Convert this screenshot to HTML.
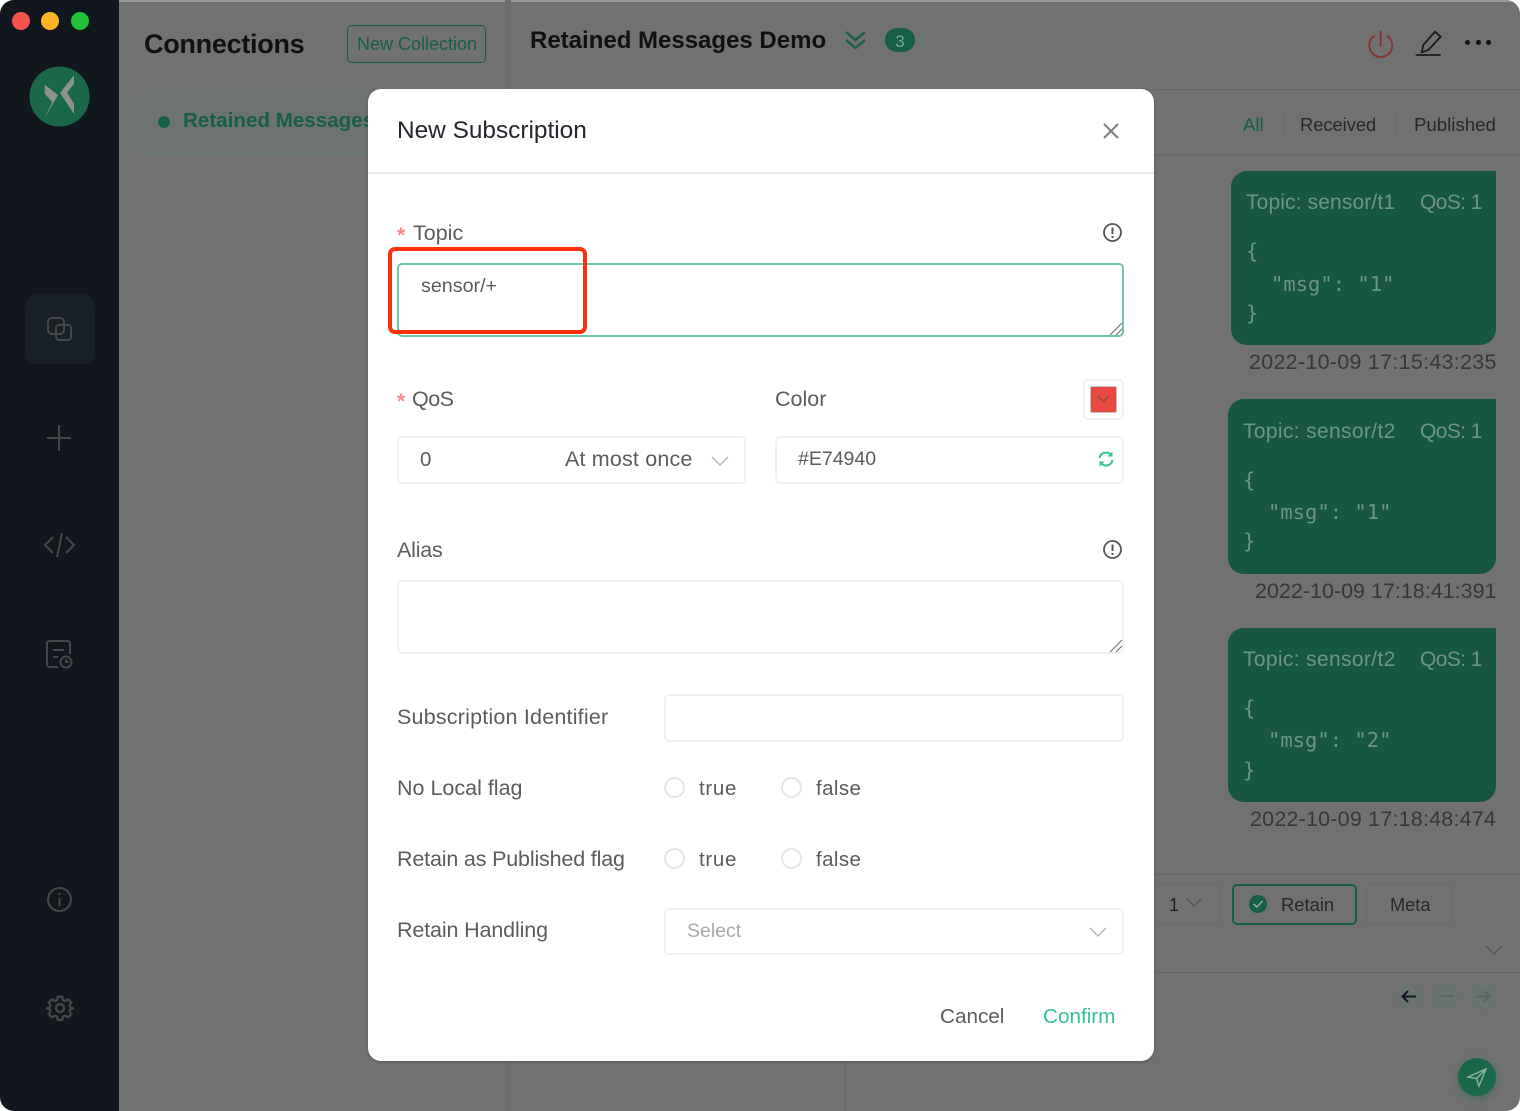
<!DOCTYPE html>
<html><head><meta charset="utf-8"><style>
*{box-sizing:border-box}
html,body{margin:0;padding:0}
body{width:1520px;height:1111px;position:relative;overflow:hidden;background:#fff;font-family:"Liberation Sans",sans-serif}
.a{position:absolute}
.t{position:absolute;white-space:nowrap;line-height:1}
.m{font-family:"DejaVu Sans Mono","Liberation Mono",monospace;font-weight:400}
.inp{position:absolute;background:#fff;border:2px solid #f0f1f4;border-radius:5px}
.l{color:#5c5c5c;font-size:21.5px}
.rd{position:absolute;width:21px;height:21px;border:2px solid #e3e5e8;border-radius:50%;background:#fff}
.bub{position:absolute;background:#175640;border-radius:16px 0 16px 16px}
.sb{stroke:#42474c;fill:none;stroke-width:2}
</style></head><body>
<div class="a" style="left:0;top:0;width:1520px;height:1111px;background:#717171;border-radius:14px;overflow:hidden">
  <div class="a" style="left:0;top:0;width:1520px;height:2px;background:#989898"></div>
  <div class="a" style="left:0;top:0;width:119px;height:1111px;background:#11171c"></div>
  <div class="a" style="left:505px;top:0;width:6px;height:1111px;background:#6c6c6c"></div>
  <div class="a" style="left:845px;top:1060px;width:1px;height:51px;background:#656565"></div>
  <div class="a" style="left:511px;top:89px;width:1009px;height:1px;background:#666"></div>
  <div class="a" style="left:1154px;top:154px;width:366px;height:2px;background:#6a6a6a"></div>
  <div class="a" style="left:1154px;top:874px;width:366px;height:1px;background:#656565"></div>
  <div class="a" style="left:1154px;top:972px;width:366px;height:1px;background:#656565"></div>
  <div class="a" style="left:134px;top:90px;width:240px;height:66px;background:#6c7371;border-radius:8px"></div>

  <div class="a" style="left:12px;top:12px;width:18px;height:18px;border-radius:50%;background:#f9524e"></div>
  <div class="a" style="left:41px;top:12px;width:18px;height:18px;border-radius:50%;background:#fcb426"></div>
  <div class="a" style="left:71px;top:12px;width:18px;height:18px;border-radius:50%;background:#22c13a"></div>

  <svg class="a" style="left:29px;top:66px" width="61" height="61" viewBox="0 0 61 61">
    <circle cx="30.5" cy="30.5" r="30" fill="#1a674a"/>
    <path d="M15.700 18.700L29 29L15.700 52L23.300 36L15.700 27.700Z" fill="#8c9490"/>
    <path d="M45 9.300L31 27L45 47.700V37.700L38 26.500L45 17.700Z" fill="#8c9490"/>
  </svg>

  <div class="a" style="left:25px;top:294px;width:70px;height:70px;border-radius:12px;background:#181f25"></div>
  <svg class="a" style="left:45px;top:315px" width="30" height="30" viewBox="0 0 30 30"><rect class="sb" x="3" y="3" width="16" height="16" rx="4"/><rect class="sb" x="11" y="10" width="15" height="15" rx="3"/></svg>
  <svg class="a" style="left:45px;top:424px" width="30" height="30" viewBox="0 0 30 30"><path class="sb" d="M2 14H26M14 1V27"/></svg>
  <svg class="a" style="left:42px;top:530px" width="35" height="30" viewBox="0 0 35 30"><path class="sb" d="M11 7L3 15L11 23M24 7L32 15L24 23M20 3L15 27"/></svg>
  <svg class="a" style="left:45px;top:640px" width="30" height="30" viewBox="0 0 30 30"><path class="sb" d="M13 27H5Q2 27 2 24V4Q2 1 5 1H22Q25 1 25 4V14M8 10H19M8 17H13"/><circle class="sb" cx="21" cy="22" r="5.5"/><path class="sb" d="M21 19V22H24"/></svg>
  <svg class="a" style="left:45px;top:885px" width="30" height="30" viewBox="0 0 30 30"><circle class="sb" cx="14.5" cy="14.5" r="11.5"/><path class="sb" d="M14.5 13V21M14.5 8V10"/></svg>
  <svg class="a" style="left:45px;top:993px" width="30" height="30" viewBox="0 0 24 24"><path class="sb" stroke-width="1.6" d="M10 2h4l.6 3 2 .9 2.6-1.6 2.8 2.8-1.6 2.6.9 2 3 .6v0l-3 .6-.9 2 1.6 2.6-2.8 2.8-2.6-1.6-2 .9-.6 3h-4l-.6-3-2-.9-2.6 1.6-2.8-2.8 1.6-2.6-.9-2-3-.6v0l3-.6.9-2L2 7.1l2.8-2.8 2.6 1.6 2-.9z" transform="translate(1.2 1.2) scale(.9)"/><circle class="sb" stroke-width="1.6" cx="12" cy="12" r="3.2"/></svg>

  <div class="t" style="left:144px;top:31px;font-size:27px;font-weight:700;color:#0f1114;letter-spacing:-.28px">Connections</div>
  <div class="a" style="left:347px;top:25px;width:139px;height:38px;border:1.5px solid #175f45;border-radius:5px"></div>
  <div class="t" style="left:357px;top:35px;font-size:18px;color:#175f45;line-height:18px">New Collection</div>
  <div class="a" style="left:158px;top:116px;width:12px;height:12px;border-radius:50%;background:#175f45"></div>
  <div class="t" style="left:183px;top:109px;font-size:20.600px;font-weight:700;color:#175f45;line-height:24px">Retained Messages</div>

  <div class="t" style="left:530px;top:29px;font-size:24px;font-weight:700;color:#0f1114">Retained Messages Demo</div>
  <svg class="a" style="left:843px;top:29px" width="25" height="22" viewBox="0 0 25 22"><path d="M3 3L12.500 11L22 3M3 11L12.500 19L22 11" fill="none" stroke="#175f45" stroke-width="2.200"/></svg>
  <div class="a" style="left:885px;top:28px;width:30px;height:24px;border-radius:12px;background:#175f45"></div>
  <div class="t" style="left:885px;top:33px;width:30px;text-align:center;font-size:17px;color:#7ea595">3</div>
  <svg class="a" style="left:1366px;top:29px" width="30" height="30" viewBox="0 0 30 30"><path d="M9 6.500A11.500 11.500 0 1 0 20.500 6.500M14.700 1.700V17.700" fill="none" stroke="#843735" stroke-width="2"/></svg>
  <svg class="a" style="left:1414px;top:29px" width="30" height="30" viewBox="0 0 30 30"><path d="M7.700 23.300L9.300 16L21 2.700L26.700 7.700L14.300 21ZM1.700 26H26.700" fill="none" stroke="#181b1f" stroke-width="1.800"/></svg>
  <div class="a" style="left:1465px;top:40px;width:5px;height:5px;border-radius:50%;background:#121417"></div>
  <div class="a" style="left:1476px;top:40px;width:5px;height:5px;border-radius:50%;background:#121417"></div>
  <div class="a" style="left:1486px;top:40px;width:5px;height:5px;border-radius:50%;background:#121417"></div>

  <div class="t" style="left:1243px;top:116px;font-size:18.500px;color:#175f45">All</div>
  <div class="a" style="left:1283px;top:110px;width:1px;height:28px;background:#686868"></div>
  <div class="t" style="left:1300px;top:116px;font-size:18.300px;color:#282828">Received</div>
  <div class="a" style="left:1395px;top:110px;width:1px;height:28px;background:#686868"></div>
  <div class="t" style="left:1414px;top:116px;font-size:18.650px;color:#282828">Published</div>

  <div class="bub" style="left:1231px;top:171px;width:265px;height:174px"></div>
  <div class="t" style="left:1246px;top:192px;font-size:21px;letter-spacing:.13px;color:#6e9484">Topic: sensor/t1</div>
  <div class="t" style="left:1420px;top:192px;font-size:21px;letter-spacing:-.6px;color:#6e9484">QoS: 1</div>
  <div class="t m" style="left:1246px;top:241px;font-size:20.500px;color:#6e9484">{</div>
  <div class="t m" style="left:1271px;top:274px;font-size:20.500px;color:#6e9484">"msg": "1"</div>
  <div class="t m" style="left:1246px;top:303px;font-size:20.500px;color:#6e9484">}</div>
  <div class="t" style="left:1249px;top:352px;font-size:21.500px;letter-spacing:.27px;color:#383838">2022-10-09 17:15:43:235</div>

  <div class="bub" style="left:1228px;top:399px;width:268px;height:175px"></div>
  <div class="t" style="left:1243px;top:421px;font-size:21px;letter-spacing:.35px;color:#6e9484">Topic: sensor/t2</div>
  <div class="t" style="left:1420px;top:421px;font-size:21px;letter-spacing:-.6px;color:#6e9484">QoS: 1</div>
  <div class="t m" style="left:1243px;top:470px;font-size:20.500px;color:#6e9484">{</div>
  <div class="t m" style="left:1268px;top:502px;font-size:20.500px;color:#6e9484">"msg": "1"</div>
  <div class="t m" style="left:1243px;top:531px;font-size:20.500px;color:#6e9484">}</div>
  <div class="t" style="left:1255px;top:581px;font-size:21.500px;color:#383838">2022-10-09 17:18:41:391</div>

  <div class="bub" style="left:1228px;top:628px;width:268px;height:174px"></div>
  <div class="t" style="left:1243px;top:649px;font-size:21px;letter-spacing:.35px;color:#6e9484">Topic: sensor/t2</div>
  <div class="t" style="left:1420px;top:649px;font-size:21px;letter-spacing:-.6px;color:#6e9484">QoS: 1</div>
  <div class="t m" style="left:1243px;top:698px;font-size:20.500px;color:#6e9484">{</div>
  <div class="t m" style="left:1268px;top:730px;font-size:20.500px;color:#6e9484">"msg": "2"</div>
  <div class="t m" style="left:1243px;top:760px;font-size:20.500px;color:#6e9484">}</div>
  <div class="t" style="left:1250px;top:809px;font-size:21.500px;letter-spacing:.2px;color:#383838">2022-10-09 17:18:48:474</div>

  <div class="a" style="left:1140px;top:884px;width:80px;height:41px;border:1.5px solid #696969;border-radius:5px"></div>
  <div class="t" style="left:1169px;top:896px;font-size:18px;color:#222">1</div>
  <svg class="a" style="left:1185px;top:897px" width="18" height="12" viewBox="0 0 18 12"><path d="M2 2L9 9L16 2" fill="none" stroke="#575757" stroke-width="1.500"/></svg>
  <div class="a" style="left:1232px;top:884px;width:125px;height:41px;border:2px solid #175f45;border-radius:5px"></div>
  <svg class="a" style="left:1248px;top:894px" width="20" height="20" viewBox="0 0 20 20"><circle cx="10" cy="10" r="9" fill="#175f45"/><path d="M5.500 10L9 13L14.500 7" fill="none" stroke="#8dafa1" stroke-width="1.500"/></svg>
  <div class="t" style="left:1281px;top:896px;font-size:18.400px;color:#282828">Retain</div>
  <div class="a" style="left:1366px;top:884px;width:87px;height:41px;border:1.5px solid #696969;border-radius:5px"></div>
  <div class="t" style="left:1390px;top:896px;font-size:18.200px;color:#282828">Meta</div>
  <svg class="a" style="left:1484px;top:943px" width="20" height="14" viewBox="0 0 20 14"><path d="M2 3L10 11L18 3" fill="none" stroke="#575757" stroke-width="1.500"/></svg>

  <div class="a" style="left:1394px;top:982px;width:29px;height:29px;border-radius:50%;background:#6a7370"></div>
  <svg class="a" style="left:1394px;top:982px" width="29" height="29" viewBox="0 0 29 29"><path d="M22 14.500H9M14 9L8.500 14.500L14 20" fill="none" stroke="#0f181f" stroke-width="2"/></svg>
  <div class="a" style="left:1432px;top:982px;width:29px;height:29px;border-radius:50%;background:#6a7370"></div>
  <div class="a" style="left:1439px;top:995px;width:15px;height:2px;background:#5c6461"></div>
  <div class="a" style="left:1469px;top:982px;width:29px;height:29px;border-radius:50%;background:#6a7370"></div>
  <svg class="a" style="left:1469px;top:982px" width="29" height="29" viewBox="0 0 29 29"><path d="M7 14.500H20M15 9L20.500 14.500L15 20" fill="none" stroke="#5c6461" stroke-width="2"/></svg>
  <div class="a" style="left:1458px;top:1058px;width:38px;height:38px;border-radius:50%;background:#1a674a;box-shadow:0 3px 8px rgba(26,103,74,.5)"></div>
  <svg class="a" style="left:1458px;top:1058px" width="38" height="38" viewBox="0 0 38 38"><path d="M10 19L28 11L21 28L18.500 20.500ZM18.500 20.500L28 11" fill="none" stroke="#8dafa1" stroke-width="1.500"/></svg>
</div>

<div class="a" style="left:368px;top:89px;width:786px;height:972px;background:#fff;border-radius:13px;box-shadow:0 1px 3px rgba(0,0,0,.25)">
  <div class="a" style="left:0;top:83px;width:786px;height:2px;background:#ebebeb"></div>
</div>
<div class="t" style="left:397px;top:119px;font-size:24.400px;color:#23272e">New Subscription</div>
<svg class="a" style="left:1101px;top:121px" width="20" height="20" viewBox="0 0 20 20"><path d="M3 3L17 17M17 3L3 17" fill="none" stroke="#7c7c7c" stroke-width="2"/></svg>

<div class="t" style="left:397px;top:225px;font-size:21px;font-weight:700;color:#f78a8a">*</div>
<div class="t l" style="left:413px;top:223px">Topic</div>
<svg class="a" style="left:1102px;top:222px" width="21" height="21" viewBox="0 0 21 21"><circle cx="10.500" cy="10.500" r="8.500" fill="none" stroke="#555" stroke-width="1.800"/><path d="M10.500 5.500V12M10.500 14V16" stroke="#555" stroke-width="2" fill="none"/></svg>
<div class="a" style="left:397px;top:263px;width:727px;height:74px;border:2px solid #6cc8a6;border-radius:5px;background:#fff"></div>
<svg class="a" style="left:1109px;top:322px" width="14" height="14" viewBox="0 0 14 14"><path d="M1 13L13 1M7 13L13 7" stroke="#777" stroke-width="1.200" fill="none"/></svg>
<div class="t" style="left:421px;top:277px;font-size:19.700px;color:#5c5c5c">sensor/+</div>
<div class="a" style="left:388px;top:247px;width:199px;height:87px;border:4px solid #fa3109;border-radius:7px"></div>

<div class="t" style="left:397px;top:391px;font-size:21px;font-weight:700;color:#f78a8a">*</div>
<div class="t l" style="left:412px;top:389px;letter-spacing:-.5px">QoS</div>
<div class="t l" style="left:775px;top:389px">Color</div>
<div class="inp" style="left:1083px;top:379px;width:41px;height:41px"></div>
<div class="a" style="left:1090px;top:386px;width:27px;height:27px;background:#e74940;border:1px solid #c9c0c0;border-radius:2px"></div>
<svg class="a" style="left:1095px;top:394px" width="17" height="11" viewBox="0 0 17 11"><path d="M3 2L8.500 7.500L14 2" fill="none" stroke="#9c4540" stroke-width="1.500"/></svg>
<div class="inp" style="left:397px;top:436px;width:349px;height:48px"></div>
<div class="t l" style="left:420px;top:450px;font-size:20.500px">0</div>
<div class="t l" style="left:565px;top:449px;letter-spacing:.17px">At most once</div>
<svg class="a" style="left:710px;top:454px" width="20" height="14" viewBox="0 0 20 14"><path d="M2 3L10 11L18 3" fill="none" stroke="#b5b8bd" stroke-width="1.500"/></svg>
<div class="inp" style="left:775px;top:436px;width:349px;height:48px"></div>
<div class="t l" style="left:798px;top:450px;font-size:19.500px">#E74940</div>
<svg class="a" style="left:1097px;top:450px" width="18" height="18" viewBox="0 0 18 18"><path d="M2.500 8A6.500 6.500 0 0 1 14 5M15.500 10A6.500 6.500 0 0 1 4 13" fill="none" stroke="#34c38f" stroke-width="2"/><path d="M15.500 1.500V6.500H10.500ZM2.500 16.500V11.500H7.500Z" fill="#34c38f"/></svg>

<div class="t l" style="left:397px;top:540px;letter-spacing:-.2px">Alias</div>
<svg class="a" style="left:1102px;top:539px" width="21" height="21" viewBox="0 0 21 21"><circle cx="10.500" cy="10.500" r="8.500" fill="none" stroke="#555" stroke-width="1.800"/><path d="M10.500 5.500V12M10.500 14V16" stroke="#555" stroke-width="2" fill="none"/></svg>
<div class="inp" style="left:397px;top:580px;width:727px;height:74px"></div>
<svg class="a" style="left:1109px;top:639px" width="14" height="14" viewBox="0 0 14 14"><path d="M1 13L13 1M7 13L13 7" stroke="#777" stroke-width="1.200" fill="none"/></svg>

<div class="t l" style="left:397px;top:707px;letter-spacing:.2px">Subscription Identifier</div>
<div class="inp" style="left:664px;top:694px;width:460px;height:48px"></div>

<div class="t l" style="left:397px;top:778px">No Local flag</div>
<div class="rd" style="left:664px;top:777px"></div>
<div class="t l" style="left:699px;top:779px;font-size:20.500px;letter-spacing:.7px">true</div>
<div class="rd" style="left:781px;top:777px"></div>
<div class="t l" style="left:816px;top:779px;font-size:20.500px;letter-spacing:.4px">false</div>

<div class="t l" style="left:397px;top:849px;letter-spacing:-.17px">Retain as Published flag</div>
<div class="rd" style="left:664px;top:848px"></div>
<div class="t l" style="left:699px;top:850px;font-size:20.500px;letter-spacing:.7px">true</div>
<div class="rd" style="left:781px;top:848px"></div>
<div class="t l" style="left:816px;top:850px;font-size:20.500px;letter-spacing:.4px">false</div>

<div class="t l" style="left:397px;top:920px;letter-spacing:-.14px">Retain Handling</div>
<div class="inp" style="left:664px;top:908px;width:460px;height:47px"></div>
<div class="t" style="left:687px;top:922px;font-size:19.500px;color:#a6a9ad">Select</div>
<svg class="a" style="left:1088px;top:925px" width="20" height="14" viewBox="0 0 20 14"><path d="M2 3L10 11L18 3" fill="none" stroke="#b5b8bd" stroke-width="1.500"/></svg>

<div class="t" style="left:940px;top:1007px;font-size:20.700px;color:#5c5c5c">Cancel</div>
<div class="t" style="left:1043px;top:1007px;font-size:20.700px;color:#34c38f">Confirm</div>
</body></html>
